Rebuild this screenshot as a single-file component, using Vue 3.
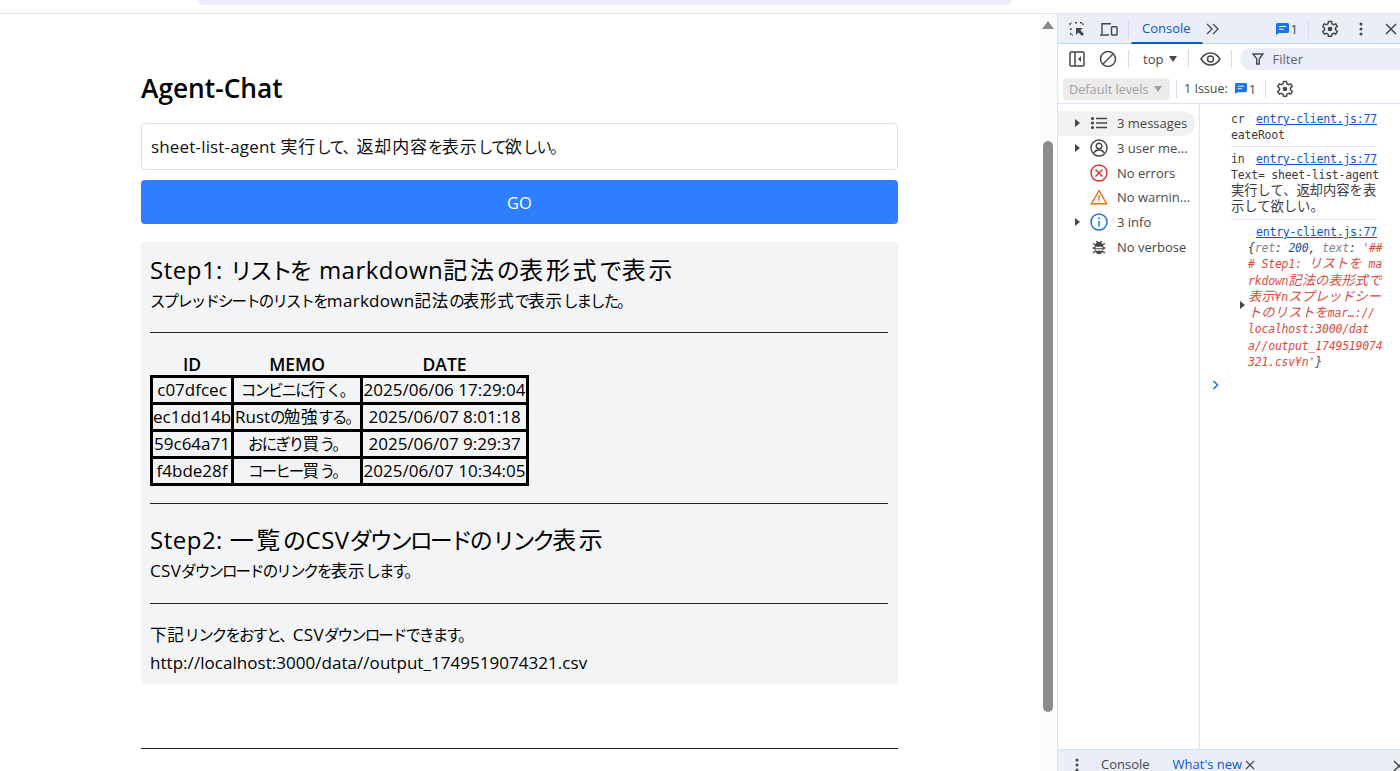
<script setup>
import { h } from 'vue'

const rows = [
  ['c07dfcec', 'コンビニに行く。', '2025/06/06 17:29:04'],
  ['ec1dd14b', 'Rustの勉強する。', '2025/06/07 8:01:18'],
  ['59c64a71', 'おにぎり買う。', '2025/06/07 9:29:37'],
  ['f4bde28f', 'コーヒー買う。', '2025/06/07 10:34:05'],
]

const strLines = ['# Step1: リストを ma', 'rkdown記法の表形式で', '表示¥nスプレッドシー', 'トのリストをmar…://', 'localhost:3000/dat', 'a//output_1749519074', "321.csv¥n'"]

// Splits a string into kanji, hiragana, katakana and latin runs, which have different metrics.
const classOf = (ch) => {
  if (/[\u4e00-\u9fff]/.test(ch)) return 'kj'
  if (/[\u3040-\u309f]/.test(ch)) return 'hg'
  if (/[\u30a0-\u30ff\u3001\u3002]/.test(ch)) return 'kn'
  return 'la'
}
const runs = (text) => {
  const out = []
  for (const ch of text) {
    const c = classOf(ch)
    const last = out[out.length - 1]
    if (last && last.c === c) last.t += ch
    else out.push({ c, t: ch })
  }
  return out
}
const T = (props) => runs(props.t).map((r) => h('span', { class: r.c }, r.t))
T.props = ['t']
</script>

<template>
  <div class="shell">
    <div class="chrome"><div class="omnibox"></div></div>
    <div class="split">
      <main class="page">
        <h1>Agent-Chat</h1>
        <div class="input"><T t="sheet-list-agent 実行して、返却内容を表示して欲しい。" /></div>
        <button class="go">GO</button>
        <section class="panel">
          <h2><T t="Step1: リストを markdown記法の表形式で表示" /></h2>
          <p><T t="スプレッドシートのリストをmarkdown記法の表形式で表示しました。" /></p>
          <hr class="r1" />
          <table>
            <thead><tr><th>ID</th><th>MEMO</th><th>DATE</th></tr></thead>
            <tbody>
              <tr v-for="r in rows" :key="r[0]"><td v-for="c in r" :key="c"><T :t="c" /></td></tr>
            </tbody>
          </table>
          <hr class="r2" />
          <h2><T t="Step2: 一覧のCSVダウンロードのリンク表示" /></h2>
          <p><T t="CSVダウンロードのリンクを表示します。" /></p>
          <hr class="r3" />
          <p class="l1"><T t="下記リンクをおすと、CSVダウンロードできます。" /></p>
          <p class="l2">http://localhost:3000/data//output_1749519074321.csv</p>
        </section>
        <hr class="foot" />
      </main>

      <div class="scrollbar">
        <svg class="arrow" width="12" height="8" viewBox="0 0 12 8"><path d="M6 0 12 8H0z" fill="#8a8a8a" /></svg>
        <div class="thumb"></div>
      </div>

      <aside class="devtools">
        <div class="bar tabs">
          <svg class="ic" width="18" height="18" viewBox="0 0 18 18" fill="none" stroke="#474747" stroke-width="1.4"><path d="M2 5V3h2M7 2.8h2M12 2.800h3V5M2.800 8v2M2.800 13v2H5" stroke-dasharray="2 1.500"/><path d="M8 8h7l-2.600 2.300L16 14l-2 2-3.600-3.600L8 15z" fill="#474747" stroke="none"/></svg>
          <svg class="ic ic2" width="20" height="18" viewBox="0 0 20 18" fill="none" stroke="#474747" stroke-width="1.400"><path d="M3 14V3.700h9M1 15h9"/><rect x="12.500" y="6.700" width="5.500" height="8.300" rx=".8"/></svg>
          <span class="sep"></span>
          <span class="tab">Console</span>
          <svg class="more" width="14" height="12" viewBox="0 0 14 12" fill="none" stroke="#474747" stroke-width="1.300"><path d="m1 1 5 5-5 5M7 1l5 5-5 5"/></svg>
          <span class="grow"></span>
          <span class="badge"><svg width="13" height="12" viewBox="0 0 13 12"><path d="M1.500 0h10A1.500 1.500 0 0 1 13 1.500v7A1.500 1.500 0 0 1 11.500 10H3L0 12V1.500A1.500 1.500 0 0 1 1.500 0z" fill="#1a73e8"/><path d="M3 3.500h7M3 6.200h4.500" stroke="#fff"/></svg>1</span>
          <span class="sep s2"></span>
          <svg class="gear" width="18" height="18" viewBox="0 0 18 18" fill="none" stroke="#474747" stroke-width="1.500"><path d="M7.500 1.500h3l.5 2.300 1.500.8 2.200-.8 1.500 2.600-1.700 1.600v1.800l1.700 1.600-1.500 2.600-2.200-.8-1.500.8-.5 2.300h-3L7 14.200l-1.500-.8-2.200.8-1.500-2.600L3.500 10V8.200L1.800 6.400l1.500-2.600 2.200.8L7 3.800z"/><circle cx="9" cy="9" r="1.600" fill="#474747"/></svg>
          <svg class="kebab" width="4" height="14" viewBox="0 0 4 14" fill="#474747"><circle cx="2" cy="2" r="1.500"/><circle cx="2" cy="7" r="1.500"/><circle cx="2" cy="12" r="1.500"/></svg>
          <svg class="close" width="12" height="12" viewBox="0 0 12 12" stroke="#474747" stroke-width="1.500"><path d="m1 1 10 10M11 1 1 11"/></svg>
        </div>
        <div class="bar ctl">
          <svg class="ic" width="18" height="18" viewBox="0 0 18 18" fill="none" stroke="#474747" stroke-width="1.500"><rect x="2" y="2" width="14" height="14" rx="1"/><path d="M7 2v14" /><path d="M13 6v6l-3-3z" fill="#474747" stroke="none"/></svg>
          <svg class="ic ban" width="18" height="18" viewBox="0 0 18 18" fill="none" stroke="#474747" stroke-width="1.500"><circle cx="9" cy="9" r="7.500"/><path d="M14 4 4 14"/></svg>
          <span class="sep s3"></span>
          <span class="top">top</span><span class="caret"></span>
          <span class="sep s4"></span>
          <svg class="eye" width="21" height="14" viewBox="0 0 21 14" fill="none" stroke="#474747" stroke-width="1.500"><path d="M1 7c2.500-4 5.800-6 9.500-6s7 2 9.500 6c-2.500 4-5.800 6-9.500 6S3.500 11 1 7z"/><circle cx="10.500" cy="7" r="3"/></svg>
          <span class="sep s5"></span>
          <div class="filter">
            <svg width="12" height="12" viewBox="0 0 12 12" fill="none" stroke="#474747" stroke-width="1.400"><path d="M1 1h10L7.300 5.700V11H4.700V5.700z"/></svg>
            <span>Filter</span>
          </div>
        </div>
        <div class="bar lvl">
          <div class="levels">Default levels<span class="caret grey"></span></div>
          <span class="sep s6"></span>
          <span class="issue">1 Issue:</span>
          <span class="badge b2"><svg width="12" height="11" viewBox="0 0 13 12"><path d="M1.500 0h10A1.500 1.500 0 0 1 13 1.500v7A1.500 1.500 0 0 1 11.500 10H3L0 12V1.500A1.500 1.500 0 0 1 1.500 0z" fill="#1a73e8"/><path d="M3 3.500h7M3 6.200h4.500" stroke="#fff"/></svg>1</span>
          <span class="sep s7"></span>
          <svg class="gear" width="18" height="18" viewBox="0 0 18 18" fill="none" stroke="#474747" stroke-width="1.500"><path d="M7.500 1.500h3l.5 2.300 1.500.8 2.200-.8 1.500 2.600-1.700 1.600v1.800l1.700 1.600-1.500 2.600-2.200-.8-1.500.8-.5 2.300h-3L7 14.200l-1.500-.8-2.200.8-1.500-2.600L3.500 10V8.200L1.800 6.400l1.500-2.600 2.200.8L7 3.800z"/><circle cx="9" cy="9" r="1.600" fill="#474747"/></svg>
        </div>
        <div class="body">
          <nav class="side">
            <div class="item sel"><i class="tri"></i>
              <svg width="18" height="18" viewBox="0 0 18 18" stroke="#474747" stroke-width="1.600" fill="#474747"><path d="M6 4.500h11M6 9h11M6 13.500h11" fill="none"/><circle cx="2.500" cy="4.500" r=".8"/><circle cx="2.500" cy="9" r=".8"/><circle cx="2.500" cy="13.500" r=".8"/></svg>
              <span>3 messages</span></div>
            <div class="item"><i class="tri"></i>
              <svg width="18" height="18" viewBox="0 0 18 18" fill="none" stroke="#474747" stroke-width="1.400"><circle cx="9" cy="9" r="8"/><circle cx="9" cy="7" r="2.800"/><path d="M3.800 14c1-2.200 3-3 5.200-3s4.200.8 5.200 3"/></svg>
              <span>3 user me...</span></div>
            <div class="item"><i class="tri none"></i>
              <svg width="18" height="18" viewBox="0 0 18 18" fill="none" stroke="#dc362e" stroke-width="1.500"><circle cx="9" cy="9" r="8"/><path d="m5.500 5.500 7 7M12.500 5.500l-7 7"/></svg>
              <span>No errors</span></div>
            <div class="item"><i class="tri none"></i>
              <svg width="20" height="18" viewBox="0 0 20 18" fill="none" stroke="#e8710a" stroke-width="1.500"><path d="M10 2 1.500 16.500h17z"/><path d="M10 7v5M10 13.200v1.500"/></svg>
              <span>No warnin...</span></div>
            <div class="item"><i class="tri"></i>
              <svg width="18" height="18" viewBox="0 0 18 18" fill="none" stroke="#1a73e8" stroke-width="1.500"><circle cx="9" cy="9" r="8"/><path d="M9 8v5.500M9 4.500V6.200"/></svg>
              <span>3 info</span></div>
            <div class="item"><i class="tri none"></i>
              <svg width="18" height="18" viewBox="0 0 18 18" fill="none" stroke="#474747" stroke-width="1.300"><ellipse cx="9" cy="10" rx="4" ry="5.500" fill="#474747"/><path d="M3 5.500 6 7M15 5.500 12 7M2.500 10H5M15.500 10H13M3 15l3-2M15 15l-3-2M6.500 3l1.500 2M11.500 3 10 5"/><path d="M5.500 9.500h7M5.500 12h7" stroke="#fff"/></svg>
              <span>No verbose</span></div>
          </nav>
          <div class="console">
            <div class="msg m1">
              <div class="head"><span>cr</span><a>entry-client.js:77</a></div>
              <div>eateRoot</div>
            </div>
            <div class="msg m2">
              <div class="head"><span>in</span><a>entry-client.js:77</a></div>
              <div>Text= sheet-list-agent</div>
              <div><T t="実行して、返却内容を表" /></div>
              <div><T t="示して欲しい。" /></div>
            </div>
            <div class="msg m3">
              <div class="head"><span></span><a>entry-client.js:77</a></div>
              <div class="obj">
                <i class="tri dark"></i>
                <div class="objtext">
                  <div><b>{</b><em>ret</em><b>:</b> <u>200</u><b>,</b> <em>text</em><b>:</b> <s>'##</s></div>
                  <div v-for="l in strLines" :key="l"><s><T :t="l" /></s><b v-if="l.startsWith('321')">}</b></div>
                </div>
              </div>
            </div>
            <svg class="prompt" width="8" height="10" viewBox="0 0 8 10" fill="none" stroke="#1a73e8" stroke-width="1.600"><path d="m1.500 1 4 4-4 4"/></svg>
          </div>
        </div>
        <div class="drawer">
          <svg width="4" height="14" viewBox="0 0 4 14" fill="#474747"><circle cx="2" cy="2" r="1.500"/><circle cx="2" cy="7" r="1.500"/><circle cx="2" cy="12" r="1.500"/></svg>
          <span class="d1">Console</span>
          <span class="d2">What's new</span>
          <svg class="dx" width="10" height="10" viewBox="0 0 10 10" stroke="#474747" stroke-width="1.200"><path d="m1 1 8 8M9 1 1 9"/></svg>
          <span class="grow"></span>
          <svg class="dc" width="12" height="12" viewBox="0 0 12 12" stroke="#474747" stroke-width="1.500"><path d="m1 1 10 10M11 1 1 11"/></svg>
        </div>
      </aside>
    </div>
  </div>
</template>

<style>
html, body { margin: 0; height: 100%; overflow: hidden; background: #fff; }
.kj { font-size: var(--kj-fs); letter-spacing: var(--kj-ls); }
.kn { font-size: var(--kn-fs); letter-spacing: var(--kn-ls); }
.hg { font-size: var(--hg-fs, var(--kn-fs)); letter-spacing: var(--hg-ls, var(--kn-ls)); }
</style>

<style scoped>
.shell { width: 1400px; height: 771px; overflow: hidden; display: flex; flex-direction: column; font-family: "Open Sans", "Noto Sans CJK JP", sans-serif; color: #000; --kj-fs: 16.500px; --kj-ls: .8px; --kn-fs: 15.500px; --kn-ls: -1.900px; }
.chrome { height: 13px; border-bottom: 1px solid #e4e4e4; flex: none; padding-left: 198px; }
.omnibox { width: 814px; height: 5px; background: #e9eef8; border-radius: 0 0 14px 14px; }
.split { flex: 1; min-height: 0; display: flex; }

.page { width: 1040px; flex: none; box-sizing: border-box; padding: 0 142px 0 141px; }
h1 { margin: 0; padding-top: 57px; font-size: 26.300px; line-height: 35px; font-weight: 600; height: 52px; box-sizing: content-box; }
.input { box-sizing: border-box; height: 47px; border: 1px solid #e0e0e3; border-radius: 4px; padding: 0 9px; font-size: 17px; line-height: 46px; letter-spacing: .17px; color: #111; white-space: nowrap; --kj-fs: 17px; --kj-ls: .9px; --kn-fs: 15.500px; --kn-ls: -1.700px; }
.go { display: block; width: 100%; height: 44px; margin-top: 10px; border: 0; border-radius: 4px; background: #2e7fff; color: #fff; font: 16.500px "Open Sans", sans-serif; }
.panel { margin-top: 18px; height: 442px; box-sizing: border-box; background: #f3f4f6; padding: 8px 10px 0 9px; }
h2 { margin: 0; height: 39px; font-weight: 400; font-size: 24px; line-height: 39px; letter-spacing: .5px; white-space: nowrap; --kj-fs: 24px; --kj-ls: 2.700px; --kn-fs: 23px; --kn-ls: -3px; --hg-fs: 23px; --hg-ls: -.5px; }
.panel p { margin: 0; height: 24px; font-size: 17px; line-height: 24px; letter-spacing: .3px; white-space: nowrap; }
.panel hr { border: 0; border-top: 1px solid #222; margin: 0; }
.r1 { margin-top: 19px !important; }
table { margin-top: 19px; border-collapse: collapse; font-size: 17px; line-height: 20px; }
th { font-weight: 600; font-size: 17.500px; height: 23px; padding: 0; text-align: center; border: 0; }
td { border: 3px solid #000; height: 24px; padding: 0; text-align: center; white-space: nowrap; }
td:nth-child(1) { width: 78px; }
td:nth-child(2) { width: 126px; }
td:nth-child(3) { width: 163px; }
.r2 { margin-top: 17px !important; margin-bottom: 16px !important; }
.r3 { margin-top: 20px !important; }
.l1 { margin-top: 19px !important; }
.panel .l2 { margin-top: 4px; letter-spacing: .04px; }
.foot { border: 0; border-top: 1px solid #222; margin: 64px 0 0; }

.scrollbar { width: 17px; flex: none; position: relative; background: #fbfbfb; border-right: 1px solid #dfe5f0; box-sizing: content-box; }
.arrow { position: absolute; left: 2px; top: 7px; }
.thumb { position: absolute; left: 3px; top: 127px; width: 10px; height: 571px; background: #8c8c8c; border-radius: 5px; }

.devtools { flex: 1; min-width: 0; display: flex; flex-direction: column; font-size: 13px; color: #474747; overflow: hidden; }
.bar { flex: none; display: flex; align-items: center; box-sizing: border-box; }
.grow { flex: 1; }
.sep { width: 1px; height: 18px; background: #d3dcec; flex: none; }
.ic { flex: none; }
.tabs { height: 30px; background: #e9eef8; border-bottom: 1px solid #c9d6ee; padding-left: 10px; position: relative; }
.ic2 { margin-left: 13px; }
.tabs .sep { margin-left: 9px; }
.tab { margin-left: 13px; color: #0b57d0; font-size: 13px; line-height: 29px; position: relative; }
.tab::after { content: ""; position: absolute; left: -11px; right: -12px; bottom: -1px; height: 2px; background: #0b57d0; border-radius: 2px 2px 0 0; }
.more { margin-left: 15px; }
.badge { display: inline-flex; align-items: center; gap: 2px; color: #474747; font-size: 13px; }
.s2 { margin-left: 10px !important; }
.gear { flex: none; margin-left: 12px; }
.kebab { margin-left: 20px; }
.close { margin-left: 22px; margin-right: 3px; }
.ctl { height: 30px; background: #fff; padding-left: 10px; }
.ban { margin-left: 13px; }
.s3 { margin-left: 11px; }
.top { margin-left: 14px; font-size: 13px; }
.caret { display: inline-block; width: 0; height: 0; border: 4.500px solid transparent; border-top: 6px solid #474747; border-bottom: 0; margin-left: 6px; }
.caret.grey { border-top-color: #a0a0a0; margin-left: 5px; }
.s4 { margin-left: 11px; }
.eye { margin-left: 11px; flex: none; }
.s5 { margin-left: 10px; }
.filter { margin-left: 8px; flex: 1; height: 22px; background: #e9eef8; border-radius: 11px 0 0 11px; display: flex; align-items: center; gap: 8px; padding-left: 12px; font-size: 13px; color: #5f6368; }
.lvl { height: 30px; padding-left: 5px; border-bottom: 1px solid #dbe5f5; }
.levels { width: 107px; height: 22px; box-sizing: border-box; background: #ececec; border-radius: 4px; color: #a0a0a0; padding-left: 6px; display: flex; align-items: center; font-size: 12.700px; white-space: nowrap; }
.s6 { margin-left: 6px; }
.issue { margin-left: 7px; font-size: 12.500px; }
.b2 { margin-left: 7px; }
.s7 { margin-left: 9px; }
.lvl .gear { margin-left: 10px; }

.body { flex: 1; min-height: 0; display: flex; }
.side { width: 141px; flex: none; border-right: 1px solid #dbe5f5; padding-top: 7px; }
.item { height: 24.700px; display: flex; align-items: center; border-radius: 0 12px 12px 0; margin-right: 4px; font-size: 13px; white-space: nowrap; }
.item svg { width: 18px; flex: none; margin-left: 10px; }
.item span { margin-left: 9px; }
.item.sel { background: #f1f1f1; }
.tri { display: block; width: 0; height: 0; flex: none; border: 4px solid transparent; border-left: 5px solid #474747; border-right: 0; margin-left: 17px; }
.tri.none { visibility: hidden; }
.console { flex: 1; min-width: 0; padding-left: 31px; font-family: "DejaVu Sans Mono", "Noto Sans CJK JP", monospace; font-size: 11.500px; line-height: 16px; letter-spacing: -.2px; color: #3c3c3c; position: relative; white-space: nowrap; padding-right: 23px; --kj-fs: 13.300px; --kj-ls: 0; --kn-fs: 13.300px; --kn-ls: 0; }
.console > .msg > div, .objtext > div { height: 16px; }
.msg { border-bottom: 1px solid #dbe5f5; }
.m1 { padding: 7px 0 3px; }
.m2 { padding: 4px 0 4px; }
.m3 { padding-top: 4px; border: 0; }
.head { display: flex; justify-content: space-between; }
.head a { color: #0b57d0; text-decoration: underline; }
.console > .msg > .obj { height: auto; display: flex; align-items: center; margin-left: 9px; }
.tri.dark { margin: 0 3px 0 0; }
.objtext { font-style: italic; }
.objtext > div { height: 16.300px; }
.objtext em { color: #80868b; }
.objtext b { font-weight: 400; color: #444; }
.objtext u { text-decoration: none; color: #1a4fa0; }
.objtext s { text-decoration: none; color: #dc4a40; }
.prompt { position: absolute; left: 12px; top: 276px; }

.drawer { flex: none; height: 22px; background: #e9eef8; border-top: 1px solid #d3e0f5; box-sizing: border-box; display: flex; align-items: flex-start; padding: 8px 0 0 17px; font-size: 13px; line-height: 13px; overflow: hidden; }
.drawer > svg { flex: none; }
.d1 { margin-left: 22px; }
.d2 { margin-left: 23px; color: #0b57d0; }
.dx { margin-left: 3px; margin-top: 2px; }
.dc { margin-top: 2px; transform: translateX(5px); }
</style>
